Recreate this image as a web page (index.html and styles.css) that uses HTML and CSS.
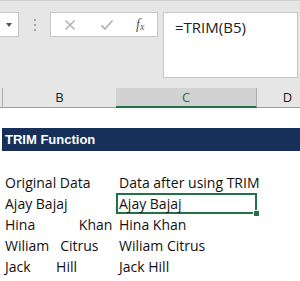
FILE: index.html
```html
<!DOCTYPE html>
<html>
<head>
<meta charset="utf-8">
<link rel="stylesheet" href="styles.css">
</head>
<body>
<div class="app">
  <div class="toolbar">
    <div class="namebox"><span class="arrow"></span></div>
    <div class="grip"><i></i><i></i><i></i></div>
    <div class="fxbox">
      <svg class="ic" width="12" height="12" viewBox="0 0 12 12"><path d="M1.5 1.5 L10.5 10.5 M10.5 1.5 L1.5 10.5" stroke="#b4b4b4" stroke-width="1.6" fill="none"/></svg>
      <svg class="ic" width="14" height="12" viewBox="0 0 14 12"><path d="M1.5 6.5 L5 10 L12.5 1.5" stroke="#b4b4b4" stroke-width="1.8" fill="none"/></svg>
      <span class="fx">f<sub>x</sub></span>
    </div>
    <div class="formula">=TRIM(B5)</div>
  </div>
  <div class="colheads">
    <div class="ch cha"></div>
    <div class="ch chb">B</div>
    <div class="ch chc">C</div>
    <div class="ch chd">D</div>
  </div>
  <div class="sheet">
    <div class="row r-empty"></div>
    <div class="row r-title"><div class="title">TRIM Function</div></div>
    <div class="row r-empty2"></div>
    <div class="row"><div class="ca"></div><div class="cb">Original Data</div><div class="cc">Data after using TRIM</div></div>
    <div class="row"><div class="ca"></div><div class="cb">Ajay Bajaj</div><div class="cc sel">Ajay Bajaj<span class="handle"></span></div></div>
    <div class="row"><div class="ca"></div><div class="cb">Hina            Khan</div><div class="cc">Hina Khan</div></div>
    <div class="row"><div class="ca"></div><div class="cb">Wiliam   Citrus</div><div class="cc">Wiliam Citrus</div></div>
    <div class="row"><div class="ca"></div><div class="cb">Jack       Hill</div><div class="cc">Jack Hill</div></div>
  </div>
</div>
</body>
</html>
```
FILE: styles.css
```css
html, body { margin: 0; padding: 0; }
body { width: 300px; height: 281px; overflow: hidden; background: #fff; font-family: "Open Sans", "Liberation Sans", sans-serif; }
.app { width: 300px; }
.toolbar {
  height: 88px; background: #e6e6e6; border-top: 1px solid #d0d0d0; box-sizing: border-box;
  display: flex; align-items: flex-start; padding-top: 11px;
}
.namebox {
  width: 19px; height: 25px; background: #fff; border: 1px solid #c6c6c6; border-left: none;
  box-sizing: border-box; position: relative; flex: none;
}
.arrow { position: absolute; left: 6px; top: 10px; width: 0; height: 0; border-left: 3.5px solid transparent; border-right: 3.5px solid transparent; border-top: 4px solid #555; }
.grip { width: 31px; height: 25px; display: flex; flex-direction: column; align-items: center; justify-content: center; gap: 3px; flex: none; }
.grip i { display: block; width: 2px; height: 2px; background: #a6a6a6; }
.fxbox {
  width: 108px; height: 25px; background: #fff; border: 1px solid #c6c6c6; box-sizing: border-box; flex: none;
  display: flex; align-items: center; padding-left: 13px; gap: 24px;
}
.fxbox .ic { flex: none; }
.fx { font-family: "Liberation Serif", serif; font-style: italic; color: #555; font-size: 14px; margin-left: -2px; }
.fx sub { font-size: 10px; vertical-align: -1px; }
.formula {
  margin-left: 5px; width: 135px; height: 66px; background: #fff; border: 1px solid #c6c6c6; box-sizing: border-box; flex: none;
  font-size: 15px; color: #222; padding: 4px 0 0 11px;
}
.colheads { height: 20px; display: flex; background: #e6e6e6; box-sizing: border-box; }
.ch { height: 20px; box-sizing: border-box; border-bottom: 1px solid #9e9e9e; font-size: 13px; line-height: 19px; text-align: center; color: #222; }
.cha { width: 3px; border-right: 1px solid #ababab; }
.chb { width: 113px; }
.chc { width: 141px; background: #d2d2d2; border-bottom: 2px solid #217346; color: #217346; border-right: 1px solid #ababab; }
.chd { flex: 1; padding-left: 18px; }
.sheet { background: #fff; }
.row { display: flex; height: 21px; font-size: 14px; color: #111; line-height: 21px; }
.r-empty { height: 20px; }
.r-title { height: 23px; padding-left: 2px; }
.title { flex: 1; background: #16305a; color: #fff; font-family: "Liberation Sans", Arial, sans-serif; font-weight: bold; font-size: 13px; line-height: 23px; padding-left: 3px; }
.r-empty2 { height: 21px; }
.ca { width: 3px; flex: none; }
.cb { width: 113px; flex: none; padding-left: 2px; box-sizing: border-box; white-space: pre; }
.cc { width: 141px; flex: none; padding-left: 3px; box-sizing: border-box; white-space: pre; position: relative; }
.sel { box-shadow: inset 0 0 0 2px #217346; }
.handle { position: absolute; right: -3px; bottom: -3px; width: 5px; height: 5px; background: #217346; border: 1px solid #fff; }
```
